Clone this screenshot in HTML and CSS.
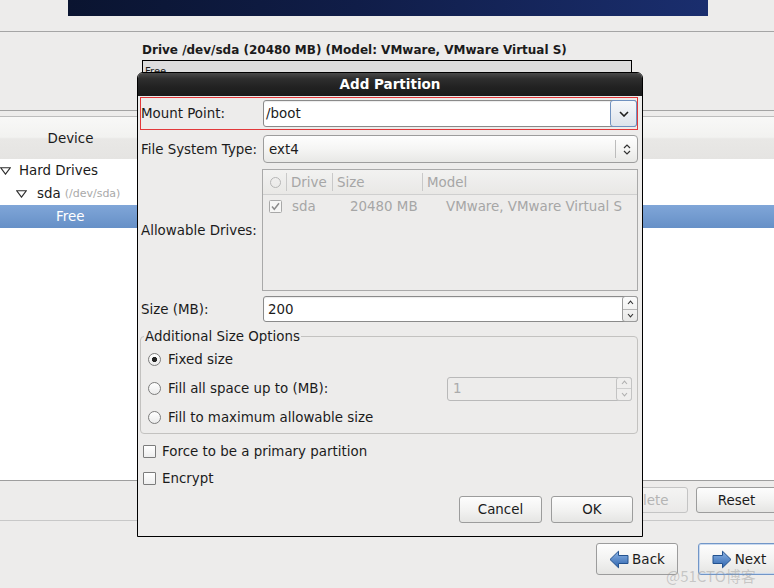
FILE: index.html
```html
<!DOCTYPE html>
<html>
<head>
<meta charset="utf-8">
<link rel="stylesheet" href="styles.css">
</head>
<body>
<div class="banner"></div>

<div class="drive">
  <div class="drive-title">Drive /dev/sda (20480 MB) (Model: VMware, VMware Virtual S)</div>
  <div class="drive-box">Free</div>
</div>

<div class="tree-area">
  <div class="tree">
    <div class="tree-head"><div class="th">Device</div></div>
    <div class="tree-body">
      <div class="row lvl0">
        <svg class="exp" width="11" height="8" viewBox="0 0 11 8"><path d="M0.8 0.8 H10.2 L5.5 7.2 Z" fill="none" stroke="#2e2e2e" stroke-width="1.1"/></svg>
        <span>Hard Drives</span>
      </div>
      <div class="row lvl1">
        <svg class="exp" width="11" height="8" viewBox="0 0 11 8"><path d="M0.8 0.8 H10.2 L5.5 7.2 Z" fill="none" stroke="#2e2e2e" stroke-width="1.1"/></svg>
        <span>sda</span><span class="dev">(/dev/sda)</span>
      </div>
      <div class="row sel"><span>Free</span></div>
    </div>
  </div>
</div>

<div class="actions">
  <button class="btn act disabled" type="button">Delete</button>
  <button class="btn act" type="button">Reset</button>
</div>

<div class="nav">
  <button class="btn navb" type="button">
    <svg width="20" height="19" viewBox="0 0 20 19"><defs><linearGradient id="ga" x1="0" y1="0" x2="0" y2="1"><stop offset="0" stop-color="#8db4e6"/><stop offset="1" stop-color="#2d64ad"/></linearGradient></defs><path d="M1 9.5 L9.5 1.2 V5.5 H19 V13.5 H9.5 V17.8 Z" fill="url(#ga)" stroke="#23528f" stroke-width="1" stroke-linejoin="round"/></svg>
    <span>Back</span>
  </button>
  <button class="btn navb focus" type="button">
    <svg width="20" height="19" viewBox="0 0 20 19"><defs><linearGradient id="gb" x1="0" y1="0" x2="0" y2="1"><stop offset="0" stop-color="#8db4e6"/><stop offset="1" stop-color="#2d64ad"/></linearGradient></defs><path d="M19 9.5 L10.5 1.2 V5.5 H1 V13.5 H10.5 V17.8 Z" fill="url(#gb)" stroke="#23528f" stroke-width="1" stroke-linejoin="round"/></svg>
    <span>Next</span>
  </button>
</div>

<div class="dialog">
  <div class="dlg-title">Add Partition</div>
  <div class="dlg-body">
    <div class="field mount">
      <label>Mount Point:</label>
      <div class="combo-entry">
        <span class="ce-text">/boot</span>
        <span class="ce-btn"><svg width="10" height="6" viewBox="0 0 10 6"><path d="M1 1 L5 5 L9 1" fill="none" stroke="#1e1e1e" stroke-width="1.6"/></svg></span>
      </div>
    </div>

    <div class="field fs">
      <label>File System Type:</label>
      <div class="combo">
        <span class="cb-text">ext4</span>
        <span class="cb-sep"></span>
        <span class="cb-arrows"><svg width="8" height="13" viewBox="0 0 8 13"><path d="M1 5 L4 2 L7 5 M1 8 L4 11 L7 8" fill="none" stroke="#333" stroke-width="1.2"/></svg></span>
      </div>
    </div>

    <div class="field drives">
      <label>Allowable Drives:</label>
      <div class="dtree">
        <div class="dtree-head">
          <div class="dh c0"><span class="hcircle"></span></div>
          <div class="dh c1">Drive</div>
          <div class="dh c2">Size</div>
          <div class="dh c3">Model</div>
        </div>
        <div class="dtree-row">
          <span class="dc0"><svg width="13" height="13" viewBox="0 0 13 13"><rect x="0.5" y="0.5" width="12" height="12" rx="1" fill="#f6f6f5" stroke="#a8a8a8"/><path d="M3 6.5 L5.3 9.2 L10 3.3" fill="none" stroke="#8c8c8c" stroke-width="1.5"/></svg></span>
          <span class="dc1">sda</span>
          <span class="dc2">20480 MB</span>
          <span class="dc3">VMware, VMware Virtual S</span>
        </div>
      </div>
    </div>

    <div class="field size">
      <label>Size (MB):</label>
      <div class="spin">
        <span class="sp-text">200</span>
        <span class="sp-btns">
          <span class="sp-b up"><svg width="7" height="5" viewBox="0 0 7 5"><path d="M1 4 L3.5 1.2 L6 4" fill="none" stroke="#333" stroke-width="1.1"/></svg></span>
          <span class="sp-b"><svg width="7" height="5" viewBox="0 0 7 5"><path d="M1 1 L3.5 3.8 L6 1" fill="none" stroke="#333" stroke-width="1.1"/></svg></span>
        </span>
      </div>
    </div>

    <fieldset class="frame">
      <legend>Additional Size Options</legend>
      <div class="opt"><span class="radio on"></span><span>Fixed size</span></div>
      <div class="opt"><span class="radio"></span><span>Fill all space up to (MB):</span>
        <div class="spin dis">
          <span class="sp-text">1</span>
          <span class="sp-btns">
            <span class="sp-b up"><svg width="7" height="5" viewBox="0 0 7 5"><path d="M1 4 L3.5 1.2 L6 4" fill="none" stroke="#b0b0b0" stroke-width="1.1"/></svg></span>
            <span class="sp-b"><svg width="7" height="5" viewBox="0 0 7 5"><path d="M1 1 L3.5 3.8 L6 1" fill="none" stroke="#b0b0b0" stroke-width="1.1"/></svg></span>
          </span>
        </div>
      </div>
      <div class="opt"><span class="radio"></span><span>Fill to maximum allowable size</span></div>
    </fieldset>

    <div class="check first"><span class="box"></span><span>Force to be a primary partition</span></div>
    <div class="check"><span class="box"></span><span>Encrypt</span></div>

    <div class="dlg-buttons">
      <button class="btn dbtn cancel" type="button">Cancel</button>
      <button class="btn dbtn ok" type="button">OK</button>
    </div>
  </div>
</div>

<div class="watermark">@51CTO博客</div>
</body>
</html>
```

FILE: styles.css
```css
* { box-sizing: border-box; }

html, body { margin: 0; padding: 0; }

body {
  width: 774px;
  height: 588px;
  overflow: hidden;
  position: relative;
  background: #edeceb;
  font-family: "DejaVu Sans", "Noto Sans", sans-serif;
  font-size: 13.4px;
  line-height: 15px;
  color: #1b1b1b;
}

.banner {
  margin-left: 68px;
  width: 640px;
  height: 16px;
  background: linear-gradient(90deg, #0a1430 0%, #101d48 45%, #1a2e6e 100%);
}

.drive {
  margin-top: 15px;
  border-top: 1px solid #a5a5a5;
  height: 79px;
  padding: 11px 0 0 142px;
}

.drive-title {
  font-weight: bold;
  font-size: 12px;
  line-height: 14px;
  white-space: nowrap;
}

.drive-box {
  margin-top: 3px;
  width: 490px;
  height: 40px;
  border: 1px solid #000;
  background: #dddddd;
  font-size: 10px;
  line-height: 12px;
  padding: 5px 0 0 2px;
}

.tree-area {
  border-top: 1px solid #a3a3a3;
  padding-top: 5px;
}

.tree {
  border-top: 1px solid #bdbdbd;
  height: 364px;
  display: flex;
  flex-direction: column;
}

.tree-head {
  height: 42px;
  background: linear-gradient(#f8f8f7 0%, #f2f2f0 48%, #e9e8e6 52%, #e5e4e2 100%);
  display: flex;
}

.th {
  width: 141px;
  display: flex;
  align-items: center;
  justify-content: center;
}

.tree-body {
  flex: 1;
  background: #fff;
}

.row {
  height: 23px;
  display: flex;
  align-items: center;
  white-space: nowrap;
}

.row.lvl0 { padding-left: 0; }
.row.lvl0 .exp { margin: 0 8px 0 0; }
.row.lvl1 { padding-left: 16px; }
.row.lvl1 .exp { margin-right: 10px; }

.dev {
  font-size: 11px;
  color: #a9a9a9;
  margin-left: 4px;
}

.row.sel {
  background: linear-gradient(#80a6d8, #6690c7);
  color: #fff;
  padding-left: 56px;
}

.btn {
  font-family: inherit;
  font-size: 13.4px;
  color: #1b1b1b;
  border: 1px solid #9c9c9c;
  border-radius: 3px;
  background: linear-gradient(#fdfdfd 0%, #f3f3f2 50%, #e5e5e3 100%);
  display: flex;
  align-items: center;
  justify-content: center;
  padding: 0;
  margin: 0;
}

.actions {
  height: 40px;
  border-top: 1px solid #9e9e9e;
  padding-top: 6px;
  display: flex;
  justify-content: flex-end;
  gap: 8px;
  margin-right: -3px;
}

.act { height: 26px; width: 81px; }
.act.disabled {
  width: 83px;
  color: #b4b4b4;
  border-color: #c4c4c4;
  background: linear-gradient(#f4f4f3, #eae9e8);
}

.nav {
  border-top: 1px solid #c8c8c8;
  padding-top: 22px;
  display: flex;
  justify-content: flex-end;
  gap: 20px;
  margin-right: -6px;
}

.navb {
  width: 82px;
  height: 32px;
  gap: 3px;
  font-size: 13.5px;
}

.navb.focus {
  border-color: #7196c8;
  box-shadow: inset 0 0 0 1px #c9d9ee;
}

/* dialog */
.dialog {
  position: absolute;
  left: 137px;
  top: 72px;
  width: 506px;
  height: 465px;
  border: 1px solid #000;
  border-radius: 6px 6px 0 0;
  background: #edeceb;
  overflow: hidden;
}

.dlg-title {
  height: 23px;
  background: linear-gradient(#4a4a4a 0%, #2e2e2e 25%, #222 60%, #1b1b1b 100%);
  color: #fff;
  font-weight: bold;
  font-size: 13.5px;
  line-height: 23px;
  text-align: center;
}

.dlg-body {
  padding: 1px 4px 0 2px;
  display: flex;
  flex-direction: column;
}

.field {
  display: grid;
  grid-template-columns: 122px 1fr;
  align-items: center;
  padding-left: 1px;
  white-space: nowrap;
}

.field.mount {
  border: 1px solid #e2383a;
  padding: 2px 0 2px 0;
}

.combo-entry {
  height: 27px;
  display: flex;
  border: 1px solid #8a8a8a;
  border-radius: 3px;
  background: #fff;
  box-shadow: inset 0 1px 1px rgba(0,0,0,0.08);
}

.ce-text {
  flex: 1;
  display: flex;
  align-items: center;
  padding-left: 2px;
}

.ce-btn {
  width: 27px;
  margin: -1px -1px -1px 0;
  border: 1px solid #6f91c0;
  border-radius: 3px;
  background: linear-gradient(#f6f8fb, #dde3eb);
  display: flex;
  align-items: center;
  justify-content: center;
}

.field.fs { margin-top: 5px; }

.combo {
  height: 28px;
  display: flex;
  align-items: center;
  border: 1px solid #9d9d9d;
  border-radius: 4px;
  background: linear-gradient(#fefefe 0%, #f5f5f4 50%, #e8e8e6 100%);
  padding-left: 5px;
}

.cb-text { flex: 1; }
.cb-sep { width: 1px; height: 18px; background: #bcbcbc; }
.cb-arrows {
  width: 21px;
  display: flex;
  justify-content: center;
  align-items: center;
}

.field.drives { margin-top: 6px; }

.dtree {
  height: 122px;
  margin-left: -1px;
  border: 1px solid #a9a9a9;
  background: #edeceb;
  color: #a6a6a6;
}

.dtree-head {
  height: 25px;
  display: flex;
  align-items: center;
  background: linear-gradient(#f2f2f1, #e9e8e6);
  border-bottom: 1px solid #cfcfcf;
}

.dh {
  height: 100%;
  display: flex;
  align-items: center;
  padding-left: 4px;
}

.dh.c0 { width: 24px; padding-left: 7px; }
.dh.c1 { width: 46px; }
.dh.c2 { width: 90px; }
.dh.c3 { flex: 1; }

.dh.c0, .dh.c1, .dh.c2 {
  background: linear-gradient(#c9c9c9, #c9c9c9) right 3px / 1px 18px no-repeat;
}

.hcircle {
  width: 11px;
  height: 11px;
  border: 1px solid #b6b6b6;
  border-radius: 50%;
}

.dtree-row {
  height: 23px;
  display: flex;
  align-items: center;
  white-space: nowrap;
}

.dc0 { width: 29px; padding-left: 6px; display: flex; }
.dc1 { width: 58px; }
.dc2 { width: 96px; }

.field.size { margin-top: 5px; }

.spin {
  height: 26px;
  display: flex;
  border: 1px solid #8a8a8a;
  border-radius: 3px;
  background: #fff;
  box-shadow: inset 0 1px 1px rgba(0,0,0,0.08);
}

.sp-text {
  flex: 1;
  display: flex;
  align-items: center;
  padding-left: 4px;
}

.sp-btns {
  width: 16px;
  margin: -1px -1px -1px 0;
  border: 1px solid #9a9a9a;
  border-radius: 3px;
  display: flex;
  flex-direction: column;
  background: linear-gradient(#fbfbfb, #e9e9e8);
}

.sp-b {
  flex: 1;
  display: flex;
  align-items: center;
  justify-content: center;
}

.sp-b.up { border-bottom: 1px solid #b5b5b5; }

.spin.dis {
  margin-left: auto;
  width: 185px;
  height: 24px;
  background: #edeceb;
  border-color: #b9b9b9;
  color: #ababab;
  box-shadow: none;
}

.spin.dis .sp-text { padding-left: 5px; }
.spin.dis .sp-btns { border-color: #c3c3c3; background: #efeeed; }
.spin.dis .sp-b.up { border-bottom-color: #cfcfcf; }

.frame {
  margin: 7px 0 0 0;
  padding: 1px 0 1px 0;
  border: 1px solid #c3c2c0;
  border-radius: 4px;
  min-width: 0;
}

.frame legend {
  margin-left: 3px;
  padding: 0 1px;
  line-height: 15px;
}

.opt {
  height: 29px;
  display: flex;
  align-items: center;
  padding: 0 5px 0 7px;
  white-space: nowrap;
}

.radio {
  width: 13px;
  height: 13px;
  border: 1px solid #7c7c7c;
  border-radius: 50%;
  background: linear-gradient(#ffffff, #ebebeb);
  margin-right: 7px;
  flex: none;
}

.radio.on {
  background: radial-gradient(circle, #262626 0 2.3px, transparent 2.9px), linear-gradient(#ffffff, #ebebeb);
}

.check {
  height: 22px;
  display: flex;
  align-items: center;
  padding-left: 3px;
  margin-top: 5px;
}

.check.first { margin-top: 6px; }

.box {
  width: 13px;
  height: 13px;
  border: 1px solid #7c7c7c;
  border-radius: 1px;
  background: linear-gradient(#ffffff, #eeeeee);
  margin-right: 6px;
  flex: none;
}

.dlg-buttons {
  margin-top: 7px;
  margin-right: 5px;
  display: flex;
  justify-content: flex-end;
  gap: 9px;
}

.dbtn { height: 27px; }
.dbtn.cancel { width: 83px; }
.dbtn.ok { width: 82px; }

.watermark {
  position: absolute;
  left: 666px;
  top: 568px;
  font-family: "Noto Sans CJK SC", "DejaVu Sans", sans-serif;
  font-size: 15px;
  line-height: 16px;
  color: rgba(150, 150, 150, 0.45);
  white-space: nowrap;
}
```
